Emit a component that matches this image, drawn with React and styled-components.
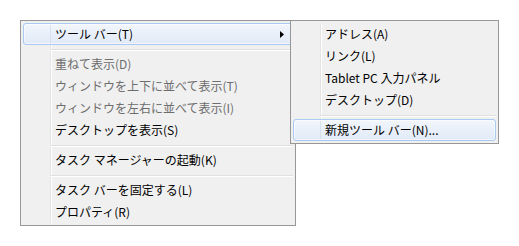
import React from "react";
import styled, { createGlobalStyle } from "styled-components";

const Global = createGlobalStyle`
  html, body { margin: 0; padding: 0; background: #ffffff; }
  body { font-family: "Noto Sans CJK JP", "Noto Sans", sans-serif; }
`;

const Page = styled.div`
  width: 519px;
  height: 246px;
  padding: 20px;
  box-sizing: border-box;
`;

const MenuWrap = styled.div`
  position: relative;
  width: 276px;
`;

const Menu = styled.div`
  position: ${(p) => (p.$sub ? "absolute" : "relative")};
  left: ${(p) => (p.$sub ? "270px" : "auto")};
  top: ${(p) => (p.$sub ? "0" : "auto")};
  width: ${(p) => p.$width}px;
  box-sizing: border-box;
  background: #f0f0f0;
  border: 1px solid #979797;
  padding: 2px;
  display: flex;
  flex-direction: column;
  z-index: ${(p) => (p.$sub ? 2 : 1)};
  &::before {
    content: "";
    position: absolute;
    top: 2px;
    bottom: 2px;
    left: 29px;
    width: 1px;
    background: #e2e3e3;
    box-shadow: 1px 0 0 #ffffff;
  }
`;

const Item = styled.div`
  position: relative;
  z-index: 1;
  height: 22px;
  box-sizing: border-box;
  display: flex;
  align-items: center;
  padding-left: 31px;
  padding-right: 8px;
  border: 1px solid ${(p) => (p.$hover ? "#a9caf2" : "transparent")};
  border-radius: 3px;
  background: ${(p) =>
    p.$hover ? "linear-gradient(to bottom, #f2f6fc, #e1eaf7)" : "transparent"};
  box-shadow: ${(p) => (p.$hover ? "inset 0 0 0 1px rgba(255,255,255,0.55)" : "none")};
  color: ${(p) => (p.$disabled ? "#6d6d6d" : "#000000")};
  font-size: 12px;
  line-height: 20px;
  white-space: nowrap;
  &::before {
    content: "";
    display: ${(p) => (p.$hover ? "block" : "none")};
    position: absolute;
    top: 1px;
    bottom: 1px;
    left: 26px;
    width: 1px;
    background: rgba(200, 212, 230, 0.55);
  }
`;

const Label = styled.span`
  flex: 1;
`;

const Arrow = styled.svg`
  width: 4px;
  height: 7px;
  flex: none;
  margin-right: 0;
`;

const Separator = styled.div`
  position: relative;
  z-index: 1;
  height: 8px;
  margin-left: 27px;
  display: flex;
  align-items: center;
  &::after {
    content: "";
    flex: 1;
    height: 1px;
    background: #e0e0e0;
    box-shadow: 0 1px 0 #ffffff;
  }
`;

export default function App() {
  return (
    <Page>
      <Global />
      <MenuWrap>
        <Menu $width={276}>
          <Item $hover>
            <Label>ツール バー(T)</Label>
            <Arrow viewBox="0 0 4 7">
              <polygon points="0,0 4,3.5 0,7" fill="#000" />
            </Arrow>
          </Item>
          <Separator />
          <Item $disabled>重ねて表示(D)</Item>
          <Item $disabled>ウィンドウを上下に並べて表示(T)</Item>
          <Item $disabled>ウィンドウを左右に並べて表示(I)</Item>
          <Item>デスクトップを表示(S)</Item>
          <Separator />
          <Item>タスク マネージャーの起動(K)</Item>
          <Separator />
          <Item>タスク バーを固定する(L)</Item>
          <Item>プロパティ(R)</Item>
        </Menu>
        <Menu $sub $width={209}>
          <Item>アドレス(A)</Item>
          <Item>リンク(L)</Item>
          <Item>Tablet PC 入力パネル</Item>
          <Item>デスクトップ(D)</Item>
          <Separator />
          <Item $hover>新規ツール バー(N)...</Item>
        </Menu>
      </MenuWrap>
    </Page>
  );
}
